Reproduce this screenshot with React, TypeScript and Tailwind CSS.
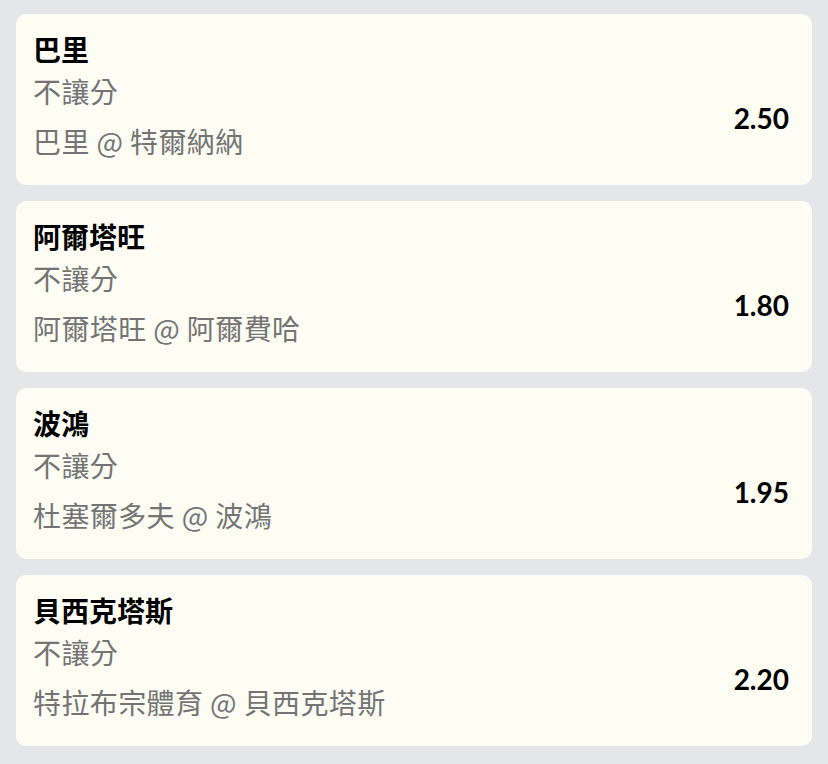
import React from "react";

const rows = [
  { title: "巴里", sub: "不讓分", match: "巴里 @ 特爾納納", odds: "2.50" },
  { title: "阿爾塔旺", sub: "不讓分", match: "阿爾塔旺 @ 阿爾費哈", odds: "1.80" },
  { title: "波鴻", sub: "不讓分", match: "杜塞爾多夫 @ 波鴻", odds: "1.95" },
  { title: "貝西克塔斯", sub: "不讓分", match: "特拉布宗體育 @ 貝西克塔斯", odds: "2.20" },
];

export default function App() {
  return (
    <div
      className="min-h-[764px] w-[828px] bg-[#e5e6ea] px-4 pt-[14px] pb-4 flex flex-col gap-4"
      style={{ fontFamily: "Lato, 'Noto Sans CJK TC', sans-serif" }}
    >
      {rows.map((r) => (
        <div key={r.title} className="bg-[#fdfdf4] rounded-[10px] pl-[17px] pr-[23px] pt-[20px] pb-[19px]">
          <div className="text-[28px] leading-[32px] font-bold text-black">{r.title}</div>
          <div className="flex items-center">
            <div
              className="flex-1 flex flex-col text-[28px] leading-[50px] tracking-[0.4px] text-[#747474]"
              style={{ fontFamily: "'Noto Sans CJK TC', sans-serif" }}
            >
              <div>{r.sub}</div>
              <div>{r.match}</div>
            </div>
            <div className="text-[28px] leading-[32px] font-bold text-black pt-[4px]">{r.odds}</div>
          </div>
        </div>
      ))}
    </div>
  );
}
